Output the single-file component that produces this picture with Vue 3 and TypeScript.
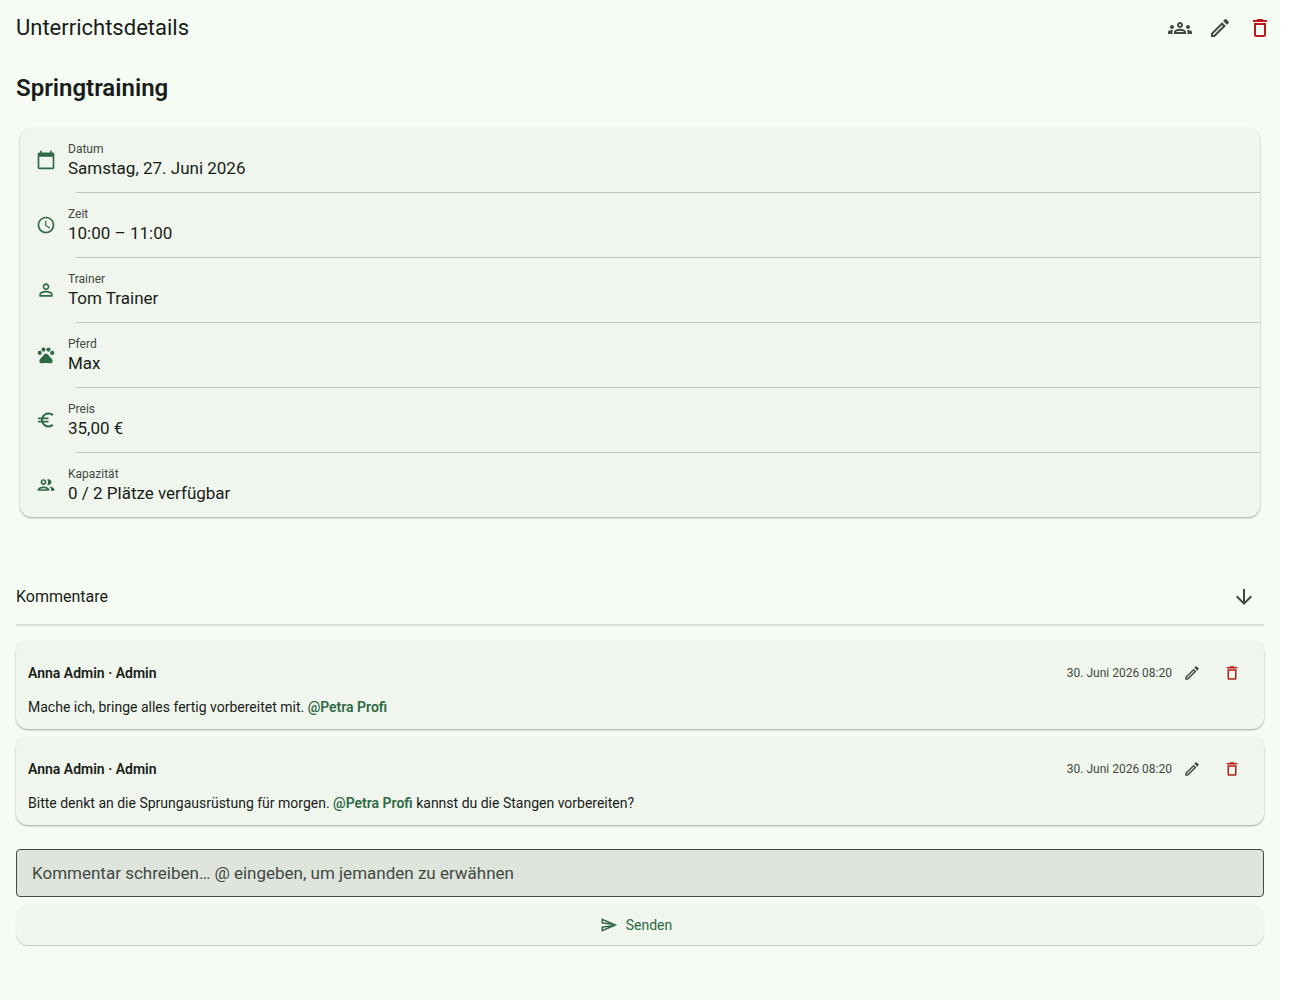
<script setup lang="ts">
import { ref } from 'vue'

interface Detail {
  label: string
  value: string
  icon: string
}

interface Comment {
  id: number
  author: string
  date: string
  before: string
  mention: string
  after: string
}

const icons = {
  groups:
    'M4 13c1.1 0 2-.9 2-2s-.9-2-2-2-2 .9-2 2 .9 2 2 2zm1.13 1.1C4.76 14.04 4.39 14 4 14c-.99 0-1.93.21-2.78.58C.48 14.9 0 15.62 0 16.43V18h4.5v-1.61c0-.83.23-1.61.63-2.29zM20 13c1.1 0 2-.9 2-2s-.9-2-2-2-2 .9-2 2 .9 2 2 2zm4 3.43c0-.81-.48-1.53-1.22-1.85C21.93 14.21 20.99 14 20 14c-.39 0-.76.04-1.13.1.4.68.63 1.46.63 2.29V18H24v-1.57zm-7.76-2.78c-1.17-.52-2.61-.9-4.24-.9s-3.07.39-4.24.9C6.68 14.13 6 15.21 6 16.39V18h12v-1.61c0-1.18-.68-2.26-1.76-2.74zM8.07 16c.09-.23.13-.39.91-.69.97-.38 1.99-.56 3.02-.56s2.05.18 3.02.56c.77.3.81.46.91.69H8.07zM12 8c.55 0 1 .45 1 1s-.45 1-1 1-1-.45-1-1 .45-1 1-1m0-2c-1.66 0-3 1.34-3 3s1.34 3 3 3 3-1.34 3-3-1.34-3-3-3z',
  edit:
    'M14.06 9.02l.92.92L5.92 19H5v-.92l9.06-9.06M17.66 3c-.25 0-.51.1-.7.29l-1.83 1.83 3.75 3.75 1.83-1.83c.39-.39.39-1.02 0-1.41l-2.34-2.34c-.2-.2-.45-.29-.71-.29zm-3.6 3.19L3 17.25V21h3.75L17.81 9.94l-3.75-3.75z',
  remove:
    'M6 19c0 1.1.9 2 2 2h8c1.1 0 2-.9 2-2V7H6v12zM8 9h8v10H8V9zm7.5-5l-1-1h-5l-1 1H5v2h14V4z',
  calendar:
    'M20 3h-1V1h-2v2H7V1H5v2H4c-1.1 0-2 .9-2 2v16c0 1.1.9 2 2 2h16c1.1 0 2-.9 2-2V5c0-1.1-.9-2-2-2zm0 18H4V8h16v13z',
  clock:
    'M11.99 2C6.47 2 2 6.48 2 12s4.47 10 9.99 10C17.52 22 22 17.52 22 12S17.52 2 11.99 2zM12 20c-4.42 0-8-3.58-8-8s3.58-8 8-8 8 3.58 8 8-3.58 8-8 8zm.5-13H11v6l5.25 3.15.75-1.23-4.5-2.67z',
  person:
    'M12 5.9c1.16 0 2.1.94 2.1 2.1s-.94 2.1-2.1 2.1S9.9 9.16 9.9 8s.94-2.1 2.1-2.1m0 9c2.97 0 6.1 1.46 6.1 2.1v1.1H5.9V17c0-.64 3.13-2.1 6.1-2.1M12 4C9.79 4 8 5.79 8 8s1.79 4 4 4 4-1.79 4-4-1.79-4-4-4zm0 9c-2.67 0-8 1.34-8 4v3h16v-3c0-2.66-5.33-4-8-4z',
  paw:
    'M2 9.5a2.5 2.5 0 1 0 5 0a2.5 2.5 0 1 0-5 0zM6.5 5.5a2.5 2.5 0 1 0 5 0a2.5 2.5 0 1 0-5 0zM12.5 5.5a2.5 2.5 0 1 0 5 0a2.5 2.5 0 1 0-5 0zM17 9.5a2.5 2.5 0 1 0 5 0a2.5 2.5 0 1 0-5 0zM17.34 14.86c-.87-1.02-1.6-1.89-2.48-2.91-.46-.54-1.05-1.08-1.75-1.32-.11-.04-.22-.07-.33-.09-.25-.04-.52-.04-.78-.04s-.53 0-.79.05c-.11.02-.22.05-.33.09-.7.24-1.28.78-1.75 1.32-.87 1.02-1.6 1.89-2.48 2.91-1.31 1.31-2.92 2.76-2.62 4.79.29 1.02 1.02 2.03 2.33 2.32.73.15 3.06-.44 5.54-.44h.18c2.48 0 4.81.58 5.54.44 1.31-.29 2.04-1.31 2.33-2.32.31-2.04-1.3-3.49-2.61-4.8z',
  euro:
    'M15 18.5c-2.51 0-4.68-1.42-5.76-3.5H15v-2H8.58c-.05-.33-.08-.66-.08-1s.03-.67.08-1H15V9H9.24C10.32 6.92 12.5 5.5 15 5.5c1.61 0 3.09.59 4.23 1.57L21 5.3C19.41 3.87 17.3 3 15 3c-3.92 0-7.24 2.51-8.48 6H3l-1 2h4.06c-.04.33-.06.66-.06 1s.02.67.06 1H3l-1 2h4.52c1.24 3.49 4.56 6 8.48 6 2.31 0 4.41-.87 6-2.3l-1.78-1.77c-1.13.98-2.6 1.57-4.22 1.57z',
  people:
    'M9 13.75c-2.34 0-7 1.17-7 3.5V19h14v-1.75c0-2.33-4.66-3.5-7-3.5zM4.34 17c.84-.58 2.87-1.25 4.66-1.25s3.82.67 4.66 1.25H4.34zM9 12c1.93 0 3.5-1.57 3.5-3.5S10.93 5 9 5 5.5 6.57 5.5 8.5 7.07 12 9 12zm0-5c.83 0 1.5.67 1.5 1.5S9.83 10 9 10s-1.5-.67-1.5-1.5S8.17 7 9 7zm7.04 6.81c1.16.84 1.96 1.96 1.96 3.44V19h4v-1.75c0-2.02-3.5-3.17-5.96-3.44zM15 12c1.93 0 3.5-1.57 3.5-3.5S16.93 5 15 5c-.54 0-1.04.13-1.5.35.63.89 1 1.98 1 3.15s-.37 2.26-1 3.15c.46.22.96.35 1.5.35z',
  down: 'M20 12l-1.41-1.41L13 16.17V4h-2v12.17l-5.58-5.59L4 12l8 8 8-8z',
  send:
    'M4.01 6.03l7.51 3.22-7.52-1 .01-2.22m7.5 8.72L4 17.97v-2.22l7.51-1M2.01 3L2 10l15 2-15 2 .01 7L23 12 2.01 3z',
}

const details: Detail[] = [
  { label: 'Datum', value: 'Samstag, 27. Juni 2026', icon: icons.calendar },
  { label: 'Zeit', value: '10:00 – 11:00', icon: icons.clock },
  { label: 'Trainer', value: 'Tom Trainer', icon: icons.person },
  { label: 'Pferd', value: 'Max', icon: icons.paw },
  { label: 'Preis', value: '35,00 €', icon: icons.euro },
  { label: 'Kapazität', value: '0 / 2 Plätze verfügbar', icon: icons.people },
]

const comments: Comment[] = [
  {
    id: 1,
    author: 'Anna Admin · Admin',
    date: '30. Juni 2026 08:20',
    before: 'Mache ich, bringe alles fertig vorbereitet mit. ',
    mention: '@Petra Profi',
    after: '',
  },
  {
    id: 2,
    author: 'Anna Admin · Admin',
    date: '30. Juni 2026 08:20',
    before: 'Bitte denkt an die Sprungausrüstung für morgen. ',
    mention: '@Petra Profi',
    after: ' kannst du die Stangen vorbereiten?',
  },
]

const draft = ref('')
</script>

<template>
  <div class="page">
    <header class="app-bar">
      <h1 class="app-title">Unterrichtsdetails</h1>
      <div class="actions">
        <button type="button" class="icon-button" aria-label="Teilnehmer">
          <svg class="icon" viewBox="0 0 24 24"><path :d="icons.groups" /></svg>
        </button>
        <button type="button" class="icon-button" aria-label="Bearbeiten">
          <svg class="icon" viewBox="0 0 24 24"><path :d="icons.edit" /></svg>
        </button>
        <button type="button" class="icon-button danger" aria-label="Löschen">
          <svg class="icon" viewBox="0 0 24 24"><path :d="icons.remove" /></svg>
        </button>
      </div>
    </header>

    <main class="content">
      <h2 class="lesson-title">Springtraining</h2>

      <dl class="card details">
        <div v-for="detail in details" :key="detail.label" class="detail">
          <svg class="icon detail-icon" viewBox="0 0 24 24" aria-hidden="true">
            <path :d="detail.icon" />
          </svg>
          <div class="detail-text">
            <dt class="detail-label">{{ detail.label }}</dt>
            <dd class="detail-value">{{ detail.value }}</dd>
          </div>
        </div>
      </dl>

      <section class="comments">
        <div class="comments-head">
          <h3 class="comments-title">Kommentare</h3>
          <button type="button" class="icon-button" aria-label="Neueste zuerst">
            <svg class="icon" viewBox="0 0 24 24"><path :d="icons.down" /></svg>
          </button>
        </div>

        <article v-for="comment in comments" :key="comment.id" class="card comment">
          <div class="comment-head">
            <span class="author">{{ comment.author }}</span>
            <time class="date">{{ comment.date }}</time>
            <button type="button" class="icon-button small" aria-label="Kommentar bearbeiten">
              <svg class="icon" viewBox="0 0 24 24"><path :d="icons.edit" /></svg>
            </button>
            <button type="button" class="icon-button small danger" aria-label="Kommentar löschen">
              <svg class="icon" viewBox="0 0 24 24"><path :d="icons.remove" /></svg>
            </button>
          </div>
          <p class="comment-text">{{ comment.before }}<strong class="mention">{{ comment.mention }}</strong>{{ comment.after }}</p>
        </article>

        <form class="composer" @submit.prevent>
          <input
            v-model="draft"
            class="field"
            type="text"
            aria-label="Kommentar"
            placeholder="Kommentar schreiben… @ eingeben, um jemanden zu erwähnen"
          />
          <button type="submit" class="send">
            <svg class="icon send-icon" viewBox="0 0 24 24" aria-hidden="true"><path :d="icons.send" /></svg>
            Senden
          </button>
        </form>
      </section>
    </main>
  </div>
</template>

<style>
body {
  margin: 0;
  background: #ffffff;
}
</style>

<style scoped>
.page {
  box-sizing: border-box;
  min-height: 100vh;
  margin-right: 26px;
  background: #f6fbf4;
  color: #181d19;
  font-family: Roboto, 'Liberation Sans', sans-serif;
}

h1,
h2,
h3,
p,
dl,
dd {
  margin: 0;
}

.icon {
  display: block;
  width: 24px;
  height: 24px;
  fill: currentColor;
}

.icon-button {
  display: flex;
  align-items: center;
  justify-content: center;
  width: 40px;
  height: 40px;
  padding: 0;
  border: 0;
  border-radius: 50%;
  background: none;
  color: #414942;
  cursor: pointer;
}

.icon-button.danger {
  color: #ba1a1a;
}

.icon-button.small .icon {
  width: 18px;
  height: 18px;
}

.app-bar {
  display: flex;
  align-items: center;
  justify-content: space-between;
  height: 56px;
  padding-left: 16px;
}

.app-title {
  font-size: 22px;
  font-weight: 400;
  line-height: 28px;
}

.actions {
  display: flex;
}

.content {
  padding: 16px;
}

.lesson-title {
  font-size: 24px;
  font-weight: 600;
  line-height: 32px;
}

.card {
  border-radius: 12px;
  background: #f0f5ee;
  box-shadow: 0 1px 2px rgba(0, 0, 0, 0.3), 0 1px 3px rgba(0, 0, 0, 0.06);
}

.details {
  margin: 24px 4px 60px;
}

.detail {
  position: relative;
  display: flex;
  align-items: center;
  gap: 12px;
  padding: 13px 16px;
}

.detail + .detail {
  margin-top: 1px;
}

.detail + .detail::before {
  content: '';
  position: absolute;
  top: -1px;
  right: 0;
  left: 56px;
  height: 1px;
  background: #c0c9c0;
}

.detail-icon {
  width: 20px;
  height: 20px;
  color: #2e6a45;
}

.detail-label {
  color: #414942;
  font-size: 12px;
  line-height: 16px;
}

.detail-value {
  font-size: 17px;
  line-height: 22px;
}

.comments-head {
  display: flex;
  align-items: center;
  justify-content: space-between;
  margin-bottom: 15px;
  padding-bottom: 7px;
  border-bottom: 2px solid #dbe1da;
}

.comments-title {
  font-size: 16px;
  font-weight: 400;
  line-height: 24px;
}

.comment {
  margin-bottom: 8px;
  padding: 12px;
}

.comment-head {
  display: flex;
  align-items: center;
  margin-bottom: 4px;
}

.author {
  flex: 1;
  font-size: 14px;
  font-weight: 600;
  line-height: 20px;
}

.date {
  color: #414942;
  font-size: 12px;
  line-height: 16px;
}

.comment-text {
  font-size: 14px;
  line-height: 20px;
}

.mention {
  color: #2e6a45;
  font-weight: 600;
}

.composer {
  display: flex;
  flex-direction: column;
  gap: 8px;
  margin-top: 24px;
}

.field {
  box-sizing: border-box;
  width: 100%;
  height: 48px;
  padding: 0 15px;
  border: 1px solid #414942;
  border-radius: 4px;
  background: #dfe4dd;
  color: #181d19;
  font: inherit;
  font-size: 17px;
}

.field::placeholder {
  color: #414942;
  opacity: 1;
}

.send {
  display: flex;
  align-items: center;
  justify-content: center;
  gap: 8px;
  height: 40px;
  padding: 0 24px 0 16px;
  border: 0;
  border-radius: 12px;
  background: #f0f5ee;
  box-shadow: 0 1px 1px rgba(0, 0, 0, 0.2);
  color: #2e6a45;
  font: inherit;
  font-size: 14px;
  line-height: 20px;
  cursor: pointer;
}

.send-icon {
  width: 18px;
  height: 18px;
}
</style>
